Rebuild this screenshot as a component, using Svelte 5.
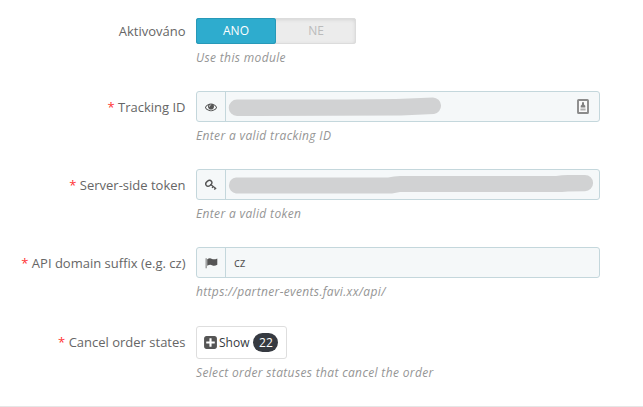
<script>
  const fields = [
    {
      label: 'Tracking ID',
      icon: 'eye',
      help: 'Enter a valid tracking ID',
      mask: 'M11 7.5 L120 7.5 L170 7 L207 5.5 A8.3 8.3 0 0 1 208 22 L175 23.5 L11 24 A8.2 8.2 0 0 1 11 7.5Z',
      contact: true
    },
    {
      label: 'Server-side token',
      icon: 'key',
      help: 'Enter a valid token',
      mask: 'M10 7.5 L162 7.5 Q168 6.2 174 6 L330 6 Q336 5 342 5 L359 5 A8.1 8.1 0 0 1 359 21.2 L342 21.4 L336 22 L174 22 L166 23.4 L10 23.4 A8 8 0 0 1 10 7.5Z'
    },
    {
      label: 'API domain suffix (e.g. cz)',
      icon: 'flag',
      help: 'https://partner-events.favi.xx/api/',
      value: 'cz'
    }
  ];
  let active = $state(true);
</script>

<form class="panel">
  <div class="row first">
    <div class="label">Aktivováno</div>
    <div class="control">
      <div class="switch">
        <button type="button" class:on={active} onclick={() => (active = true)}>ANO</button>
        <button type="button" class:on={!active} onclick={() => (active = false)}>NE</button>
      </div>
      <p class="help">Use this module</p>
    </div>
  </div>

  {#each fields as f}
    <div class="row">
      <div class="label"><span class="req">*</span> {f.label}</div>
      <div class="control">
        <div class="group">
          <span class="addon">
            {#if f.icon === 'eye'}
              <svg width="12" height="12" viewBox="0 0 1792 1792"><path d="M1664 960q-152-236-381-353 61 104 61 225 0 185-131.5 316.5t-316.5 131.5-316.5-131.5-131.5-316.5q0-121 61-225-229 117-381 353 133 205 333.5 326.5t434.5 121.5 434.5-121.5 333.5-326.5zm-720-384q0-20-14-34t-34-14q-125 0-214.5 89.5t-89.5 214.5q0 20 14 34t34 14 34-14 14-34q0-86 61-147t147-61q20 0 34-14t14-34zm848 384q0 34-20 69-140 230-376.5 368.5t-499.5 138.5-499.5-139-376.5-368q-20-35-20-69t20-69q140-229 376.5-368t499.5-139 499.5 139 376.5 368q20 35 20 69z" /></svg>
            {:else if f.icon === 'key'}
              <svg width="12" height="12" viewBox="0 0 12 12">
                <ellipse cx="3.8" cy="4.3" rx="3.3" ry="2.5" transform="rotate(-38 3.8 4.3)" fill="none" stroke="#555" stroke-width="1.4" />
                <path d="M5.3 5.3 L11.2 9.7 M8 7.6 L7.1 9 M10.3 9.2 L9.4 10.7" fill="none" stroke="#555" stroke-width="1.3" />
              </svg>
            {:else}
              <svg width="13" height="12" viewBox="0 0 13 12">
                <path d="M.6 1.2h1.1v10H.6z" opacity=".75" />
                <path d="M2.2 2.2Q4.8.7 7 1.9 9 3 12.3 1.5V7.8Q9.3 9.5 7 8.2 5 7.2 2.2 8.8Z" />
              </svg>
            {/if}
          </span>
          <div class="input">
            {#if f.mask}
              <svg class="mask" width="373" height="29" viewBox="0 0 373 29">
                <path d={f.mask} fill="#d1d2d3" />
                {#if f.contact}
                  <rect x="352" y="8" width="10" height="13" rx=".6" fill="#fafafa" stroke="#8b8b8b" stroke-width="1.9" />
                  <path d="M356 10.3h2v2.2l1.3 1.3v1.7h-4.6v-1.7l1.3-1.3z" fill="#808080" />
                  <path d="M354.4 16.5h5.2v2h-5.2z" fill="#b0b0b0" />
                {/if}
              </svg>
            {:else}
              <span class="value">{f.value}</span>
            {/if}
          </div>
        </div>
        <p class="help">{f.help}</p>
      </div>
    </div>
  {/each}

  <div class="row last">
    <div class="label"><span class="req">*</span> Cancel order states</div>
    <div class="control">
      <button type="button" class="show">
        <svg width="15" height="15" viewBox="0 0 1792 1792"><path d="M1408 960v-128q0-26-19-45t-45-19h-320v-320q0-26-19-45t-45-19h-128q-26 0-45 19t-19 45v320h-320q-26 0-45 19t-19 45v128q0 26 19 45t45 19h320v320q0 26 19 45t45 19h128q26 0 45-19t19-45v-320h320q26 0 45-19t19-45zm256-544v960q0 119-84.5 203.5t-203.5 84.5h-960q-119 0-203.5-84.5t-84.5-203.5v-960q0-119 84.5-203.5t203.5-84.5h960q119 0 203.5 84.5t84.5 203.5z" /></svg>
        <span>Show</span>
        <span class="badge">22</span>
      </button>
      <p class="help">Select order statuses that cancel the order</p>
    </div>
  </div>
</form>

<style>
  :global(body) {
    background: #fff;
  }
  .panel {
    box-sizing: border-box;
    width: 643px;
    height: 407px;
    padding-top: 18px;
    border-bottom: 1px solid #e6e6e6;
    font: 13px/18px 'Open Sans', sans-serif;
    color: #666;
    overflow: hidden;
  }
  .row {
    display: grid;
    grid-template-columns: 185.5px 404px;
    column-gap: 10.5px;
    height: 78px;
  }
  .row.first {
    height: 73px;
  }
  .row.last {
    padding-top: 1px;
  }
  .label {
    padding-top: 7px;
    text-align: right;
    white-space: nowrap;
  }
  .first .label {
    padding-top: 4px;
  }
  .req {
    color: #f33;
  }
  .help {
    margin: 6px 0 0;
    font-size: 12px;
    line-height: 16px;
    font-style: italic;
    letter-spacing: 0.35px;
    color: #959595;
  }
  button {
    font: inherit;
    padding: 0;
    margin: 0;
  }
  .switch {
    box-sizing: border-box;
    display: flex;
    width: 160px;
    height: 26px;
    border-radius: 3px;
    background: #ececec;
    box-shadow: inset 0 0 0 1px #dcdcdc, inset 0 1px 4px rgba(0, 0, 0, 0.15);
  }
  .switch button {
    flex: 1;
    border: 0;
    border-radius: 3px;
    background: transparent;
    color: #bbb;
    font-size: 12px;
    line-height: 24px;
  }
  .switch button.on {
    background: #2eacce;
    box-shadow: inset 0 0 0 1px #2799b8;
    color: #fff;
  }
  .group {
    box-sizing: border-box;
    display: flex;
    width: 404px;
    height: 31px;
    border: 1px solid #c4d7dc;
    border-radius: 3px;
    background: #f5f8f9;
  }
  .addon {
    display: flex;
    align-items: center;
    justify-content: center;
    width: 28px;
    border-right: 1px solid #c4d7dc;
  }
  svg {
    display: block;
    fill: #555;
  }
  .input {
    flex: 1;
    display: flex;
    align-items: center;
  }
  .value {
    padding: 1px 0 0 8px;
    font-size: 12px;
    color: #555;
  }
  .show {
    box-sizing: border-box;
    display: flex;
    align-items: center;
    width: 91px;
    height: 33px;
    padding-left: 6px;
    border: 1px solid #dedede;
    border-radius: 3px;
    background: #fff;
    font-size: 12px;
    color: #363a41;
  }
  .show span {
    margin-left: 1px;
  }
  .show .badge {
    width: 25px;
    height: 19px;
    margin-left: 4px;
    border-radius: 10px;
    background: #363a41;
    color: #fff;
    line-height: 19px;
    text-align: center;
  }
</style>
